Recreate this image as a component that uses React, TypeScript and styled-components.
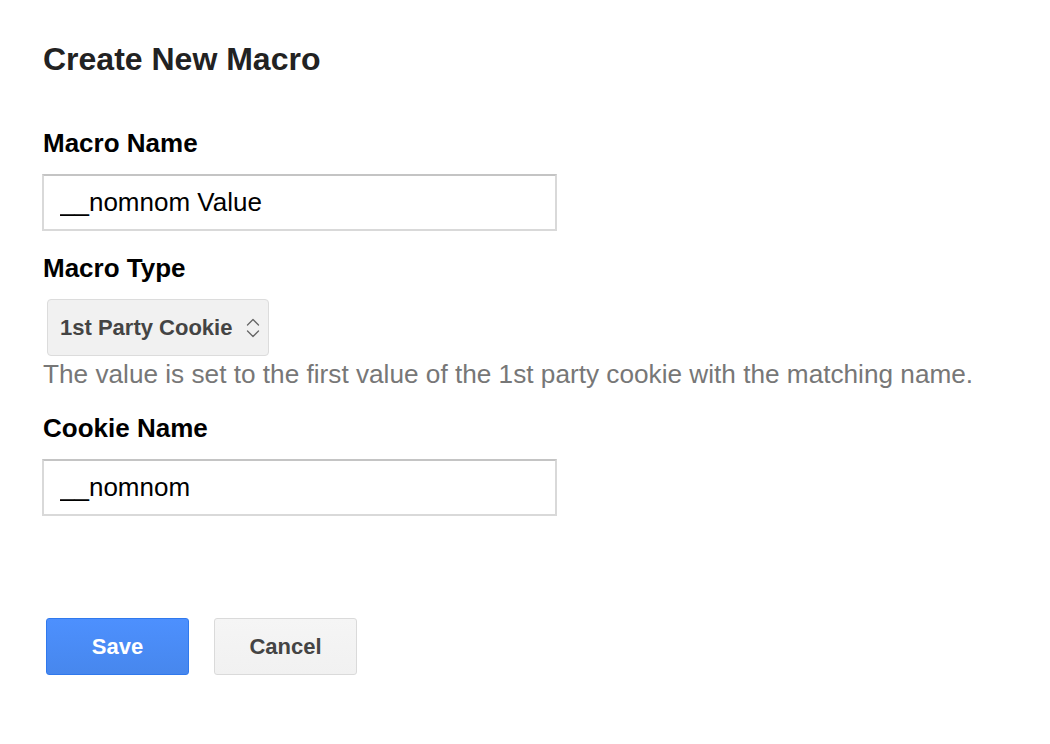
import React from "react";
import styled, { createGlobalStyle } from "styled-components";

const GlobalStyle = createGlobalStyle`
  html, body {
    margin: 0;
    padding: 0;
    background: #ffffff;
  }
  body {
    font-family: "Liberation Sans", Arial, sans-serif;
  }
`;

export default function App() {
  return (
    <>
      <GlobalStyle />
      <Page>
        <Title>Create New Macro</Title>

        <Label $top={51}>Macro Name</Label>
        <TextField readOnly defaultValue="__nomnom Value" />

        <Label $top={22}>Macro Type</Label>
        <SelectBox>
          <span>1st Party Cookie</span>
          <svg width="14" height="22" viewBox="0 0 14 22" fill="none">
            <path
              d="M1.5 8 L7 2.5 L12.5 8"
              stroke="#666"
              strokeWidth="1.3"
              strokeLinecap="round"
              strokeLinejoin="round"
            />
            <path
              d="M1.5 14 L7 19.5 L12.5 14"
              stroke="#666"
              strokeWidth="1.3"
              strokeLinecap="round"
              strokeLinejoin="round"
            />
          </svg>
        </SelectBox>
        <HelpText>
          The value is set to the first value of the 1st party cookie with the
          matching name.
        </HelpText>

        <Label $top={24}>Cookie Name</Label>
        <TextField readOnly defaultValue="__nomnom" />

        <Actions>
          <Button $primary>Save</Button>
          <Button>Cancel</Button>
        </Actions>
      </Page>
    </>
  );
}

const Page = styled.div`
  display: flex;
  flex-direction: column;
  align-items: flex-start;
  padding: 41px 0 0 42px;
  width: 1008px;
  height: 744px;
  box-sizing: border-box;
`;

const Title = styled.h1`
  margin: 0 0 0 1px;
  font-size: 32px;
  line-height: 36px;
  font-weight: 700;
  color: #222222;
`;

const Label = styled.div`
  margin: ${({ $top }: { $top: number }) => $top}px 0 16px 1px;
  font-size: 26px;
  line-height: 30px;
  font-weight: 700;
  color: #000000;
`;

const TextField = styled.input`
  width: 515px;
  height: 57px;
  box-sizing: border-box;
  padding: 0 0 0 16px;
  border: 2px solid #d9d9d9;
  border-top-color: #c4c4c4;
  border-radius: 0;
  outline: none;
  font-family: "Liberation Sans", Arial, sans-serif;
  font-size: 26px;
  color: #000000;
  background: #ffffff;
`;

const SelectBox = styled.div`
  display: flex;
  align-items: center;
  justify-content: space-between;
  width: 222px;
  height: 57px;
  box-sizing: border-box;
  margin-left: 5px;
  padding: 0 8px 0 12px;
  border: 1px solid #dcdcdc;
  border-radius: 4px;
  background: #f1f1f1;
  color: #444444;
  font-size: 22px;
  font-weight: 700;
  white-space: nowrap;

  svg {
    flex-shrink: 0;
  }
`;

const HelpText = styled.div`
  margin: 3px 0 0 1px;
  font-size: 26.2px;
  line-height: 30px;
  color: #777777;
  white-space: nowrap;
`;

const Actions = styled.div`
  display: flex;
  gap: 25px;
  margin: 102px 0 0 4px;
`;

const Button = styled.button`
  width: 143px;
  height: 57px;
  box-sizing: border-box;
  border-radius: 3px;
  font-family: "Liberation Sans", Arial, sans-serif;
  font-size: 22px;
  font-weight: 700;
  cursor: pointer;
  ${({ $primary }: { $primary?: boolean }) =>
    $primary
      ? `
    background: linear-gradient(#4d90fe, #4787ed);
    border: 1px solid #3079ed;
    color: #ffffff;
  `
      : `
    background: linear-gradient(#f5f5f5, #f1f1f1);
    border: 1px solid #dadada;
    color: #444444;
  `}
`;
